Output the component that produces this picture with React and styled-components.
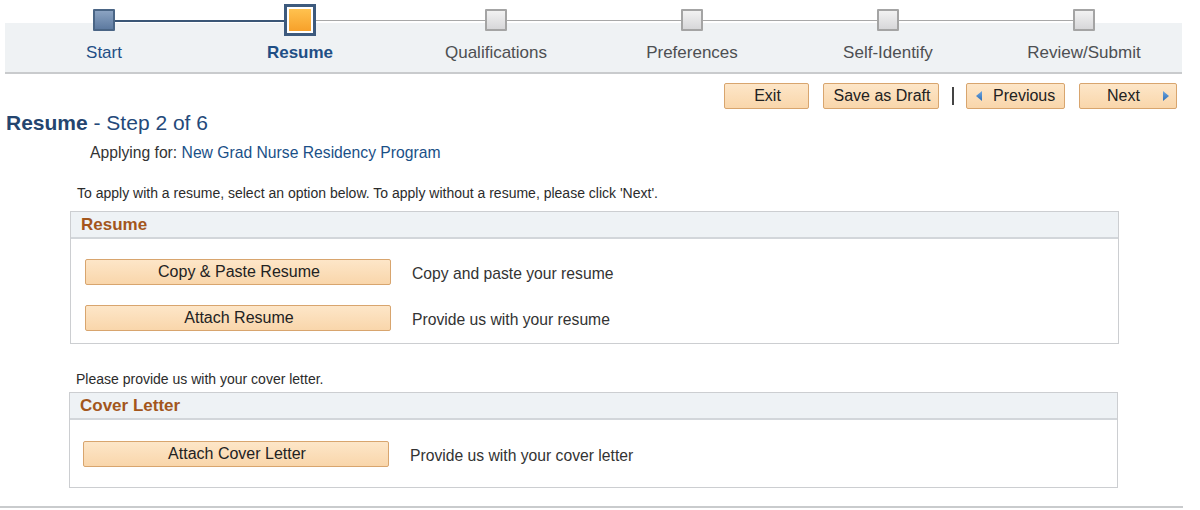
import React from 'react'
import styled, { createGlobalStyle } from 'styled-components'

const GlobalStyle = createGlobalStyle`
  body {
    margin: 0;
    background: #fff;
    font-family: "Liberation Sans", Arial, Helvetica, sans-serif;
    color: #333;
  }
`

const Page = styled.div`
  width: 1200px;
  height: 510px;
  overflow: hidden;
`

const Stepper = styled.div`
  display: flex;
  width: 1176px;
  margin-left: 5px;
  padding-left: 1px;
  height: 72px;
  background: linear-gradient(to bottom, #fff 0, #fff 23px, #eff2f4 23px);
  border-bottom: 2px solid #c9cbcd;
`

const Step = styled.div`
  position: relative;
  width: 196px;
  display: flex;
  flex-direction: column;
  align-items: center;

  &::before,
  &::after {
    content: '';
    position: absolute;
    top: 20px;
    width: 50%;
  }
  &::before {
    left: 0;
    background: ${(p) => (p.$first ? 'transparent' : p.$done ? '#3b5676' : '#a8a8a8')};
    height: ${(p) => (p.$done ? 2 : 1)}px;
  }
  &::after {
    right: 0;
    background: ${(p) => (p.$last ? 'transparent' : p.$nextDone ? '#3b5676' : '#a8a8a8')};
    height: ${(p) => (p.$nextDone ? 2 : 1)}px;
  }
`

const MarkerSlot = styled.div`
  position: relative;
  z-index: 1;
  height: 40px;
  display: flex;
  align-items: center;
  justify-content: center;
`

const Marker = styled.div`
  box-sizing: border-box;
  width: 22px;
  height: 22px;
  border: 2px solid ${(p) => (p.$state === 'done' ? '#4a6585' : '#a4a4a4')};
  background: ${(p) =>
    p.$state === 'done'
      ? 'linear-gradient(to bottom, #8ba3c2, #5d7aa0)'
      : 'linear-gradient(to bottom, #f2f2f2, #d7d7d9)'};
  border-radius: 1px;
`

const ActiveFrame = styled.div`
  box-sizing: border-box;
  width: 32px;
  height: 32px;
  border: 3px solid #3d5a7d;
  background: #fff;
  padding: 2px;
  margin-top: -1px;
`

const ActiveFill = styled.div`
  width: 100%;
  height: 100%;
  background: linear-gradient(to bottom, #ffc24f, #f7a12a);
`

const StepLabel = styled.div`
  margin-top: 3px;
  font-size: 17px;
  line-height: 20px;
  color: ${(p) => (p.$on ? '#1f4f85' : '#4d4f52')};
  font-weight: ${(p) => (p.$current ? 'bold' : 'normal')};
`

const Toolbar = styled.div`
  display: flex;
  justify-content: flex-end;
  align-items: center;
  width: 1177px;
  margin-top: 9px;
  gap: 14px;
`

const Button = styled.button`
  box-sizing: border-box;
  height: 26px;
  width: ${(p) => p.$w}px;
  padding: 0 6px 0 8px;
  background: linear-gradient(to bottom, #fde6c8, #f9d6ab);
  border: 1px solid #d8a56e;
  border-radius: 2px;
  font-family: inherit;
  font-size: 16px;
  color: #222;
  display: flex;
  align-items: center;
  justify-content: ${(p) => p.$justify || 'center'};
  gap: 10px;
  cursor: pointer;
`

const NextText = styled.span`
  margin-left: 19px;
`

const Separator = styled.span`
  width: 2px;
  height: 18px;
  background: #444;
  margin: 0 -2px 0 -1px;
`

const Title = styled.h1`
  margin: 2px 0 0 6px;
  font-size: 21px;
  line-height: 24px;
  font-weight: normal;
  color: #24497a;

  b {
    font-weight: bold;
    color: #24456f;
  }
`

const Applying = styled.div`
  margin: 8px 0 0 90px;
  font-size: 15.7px;
  line-height: 20px;
  color: #333;

  span {
    color: #1a5087;
  }
`

const Note = styled.div`
  margin: ${(p) => p.$top}px 0 0 ${(p) => p.$left}px;
  font-size: 14px;
  line-height: 16px;
  color: #2b2b2b;
`

const Box = styled.section`
  box-sizing: border-box;
  width: 1049px;
  margin: ${(p) => p.$top}px 0 0 ${(p) => p.$left}px;
  border: 1px solid #ccced1;
`

const BoxHeader = styled.h2`
  margin: 0;
  height: 25px;
  padding-left: 10px;
  background: #eef2f5;
  border-bottom: 2px solid #d2d6da;
  font-size: 17px;
  line-height: 25px;
  font-weight: bold;
  color: #a3561c;
`

const BoxBody = styled.div`
  display: flex;
  flex-direction: column;
  gap: 20px;
  padding: ${(p) => p.$pad};
`

const Row = styled.div`
  display: flex;
  align-items: center;
  gap: 21px;
`

const RowText = styled.span`
  font-size: 15.7px;
  color: #333;
  margin-top: 4px;
`

const Rule = styled.div`
  width: 1183px;
  height: 2px;
  background: #c9cbcd;
  margin-top: 18px;
`

const Arrow = ({ dir }) => (
  <svg width="8" height="12" viewBox="0 0 8 12">
    <defs>
      <linearGradient id={`ag-${dir}`} x1="0" y1="0" x2="0" y2="1">
        <stop offset="0" stopColor="#6fa7e0" />
        <stop offset="1" stopColor="#2d6db6" />
      </linearGradient>
    </defs>
    <path
      d={dir === 'left' ? 'M7 1 L1 6 L7 11 Z' : 'M1 1 L7 6 L1 11 Z'}
      fill={`url(#ag-${dir})`}
    />
  </svg>
)

const steps = ['Start', 'Resume', 'Qualifications', 'Preferences', 'Self-Identify', 'Review/Submit']
const current = 1

export default function App() {
  return (
    <Page>
      <GlobalStyle />
      <Stepper>
        {steps.map((s, i) => (
          <Step
            key={s}
            $first={i === 0}
            $last={i === steps.length - 1}
            $done={i <= current}
            $nextDone={i < current}
          >
            <MarkerSlot>
              {i === current ? (
                <ActiveFrame>
                  <ActiveFill />
                </ActiveFrame>
              ) : (
                <Marker $state={i < current ? 'done' : 'todo'} />
              )}
            </MarkerSlot>
            <StepLabel $on={i <= current} $current={i === current}>
              {s}
            </StepLabel>
          </Step>
        ))}
      </Stepper>

      <Toolbar>
        <Button $w={85}>Exit</Button>
        <Button $w={116}>Save as Draft</Button>
        <Separator />
        <Button $w={99} $justify="flex-start">
          <Arrow dir="left" />
          Previous
        </Button>
        <Button $w={98} $justify="space-between">
          <NextText>Next</NextText>
          <Arrow dir="right" />
        </Button>
      </Toolbar>

      <Title>
        <b>Resume</b> - Step 2 of 6
      </Title>
      <Applying>
        Applying for: <span>New Grad Nurse Residency Program</span>
      </Applying>

      <Note $top={22} $left={77}>
        To apply with a resume, select an option below. To apply without a resume, please click 'Next'.
      </Note>
      <Box $top={10} $left={70}>
        <BoxHeader>Resume</BoxHeader>
        <BoxBody $pad="20px 14px 12px">
          <Row>
            <Button $w={306}>Copy &amp; Paste Resume</Button>
            <RowText>Copy and paste your resume</RowText>
          </Row>
          <Row>
            <Button $w={306}>Attach Resume</Button>
            <RowText>Provide us with your resume</RowText>
          </Row>
        </BoxBody>
      </Box>

      <Note $top={27} $left={76}>
        Please provide us with your cover letter.
      </Note>
      <Box $top={5} $left={69}>
        <BoxHeader>Cover Letter</BoxHeader>
        <BoxBody $pad="21px 13px 20px">
          <Row>
            <Button $w={306}>Attach Cover Letter</Button>
            <RowText>Provide us with your cover letter</RowText>
          </Row>
        </BoxBody>
      </Box>
      <Rule />
    </Page>
  )
}
